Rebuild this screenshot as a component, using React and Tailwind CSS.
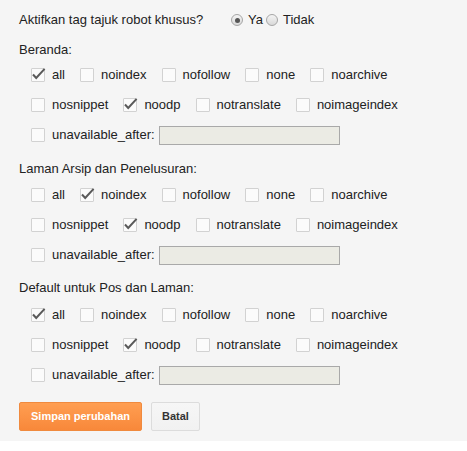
import React from 'react';

const sections = [
    {
        title: 'Beranda:',
        mt: 'mt-[10px]',
        rowsMt: 'mt-0',
        checked: ['all', 'noodp'],
    },
    {
        title: 'Laman Arsip dan Penelusuran:',
        mt: 'mt-[9px]',
        rowsMt: 'mt-[1px]',
        checked: ['noindex', 'noodp'],
    },
    {
        title: 'Default untuk Pos dan Laman:',
        mt: 'mt-[8px]',
        rowsMt: 'mt-[2px]',
        checked: ['all', 'noodp'],
    },
];

const row1 = ['all', 'noindex', 'nofollow', 'none', 'noarchive'];
const row2 = ['nosnippet', 'noodp', 'notranslate', 'noimageindex'];

const Checkbox = ({ checked }) => (
    <span className="relative inline-block w-[14px] h-[14px] shrink-0 border border-[#d2d2d2] bg-[#fbfbfb] rounded-[1px]">
        {checked && (
            <svg
                className="absolute -left-[1px] -top-[1px] overflow-visible"
                width="14"
                height="14"
                viewBox="0 0 14 14"
            >
                <path d="M2 6.5 L5.2 10 L13.6 0.8" fill="none" stroke="#5a5a5a" strokeWidth="2" />
            </svg>
        )}
    </span>
);

const Radio = ({ checked }) => (
    <span className="w-[12px] h-[12px] shrink-0 rounded-full border border-[#a6a6a6] bg-linear-to-b from-[#f4f4f4] to-[#d9d9d9] flex items-center justify-center">
        {checked && <span className="w-[5px] h-[5px] rounded-full bg-[#555]" />}
    </span>
);

const Item = ({ label, checked }) => (
    <label className="flex items-center gap-[7px]">
        <Checkbox checked={checked} />
        <span>{label}</span>
    </label>
);

const Section = ({ section }) => (
    <div className={section.mt}>
        <div className="h-[20px] flex items-center">{section.title}</div>
        <div className={`${section.rowsMt} pl-[12px]`}>
            <div className="h-[30px] flex items-center gap-[15px]">
                {row1.map((r) => (
                    <Item key={r} label={r} checked={section.checked.includes(r)} />
                ))}
            </div>
            <div className="h-[30px] flex items-center gap-[15px]">
                {row2.map((r) => (
                    <Item key={r} label={r} checked={section.checked.includes(r)} />
                ))}
            </div>
            <div className="h-[30px] flex items-center">
                <Item label="unavailable_after:" checked={false} />
                <input
                    type="text"
                    disabled
                    className="ml-[4px] w-[181px] h-[19px] border border-[#a9a9a9] bg-[#ebebe4]"
                />
            </div>
        </div>
    </div>
);

const App = () => {
    return (
        <div className="w-[467px] h-[451px] bg-white font-['Liberation_Sans',Arial,sans-serif] text-[13px] text-[#222]">
            <div className="bg-[#f5f5f5] pt-[10px] pb-[10px] pl-[19px]">
                <div className="h-[20px] flex items-center">
                    <span className="w-[212px]">Aktifkan tag tajuk robot khusus?</span>
                    <Radio checked />
                    <span className="ml-[5px]">Ya</span>
                    <span className="ml-[3px]"><Radio /></span>
                    <span className="ml-[5px]">Tidak</span>
                </div>

                {sections.map((s) => (
                    <Section key={s.title} section={s} />
                ))}

                <div className="mt-[12px] flex gap-[9px]">
                    <button className="h-[29px] px-[11px] rounded-[2px] border border-[#f08a3e] bg-linear-to-b from-[#ff9e51] to-[#f8883a] text-white text-[11px] font-bold">
                        Simpan perubahan
                    </button>
                    <button className="h-[29px] px-[10px] rounded-[2px] border border-[#dcdcdc] bg-linear-to-b from-[#f6f6f6] to-[#f1f1f1] text-[#333] text-[11px] font-bold">
                        Batal
                    </button>
                </div>
            </div>
        </div>
    );
};

export default App;
